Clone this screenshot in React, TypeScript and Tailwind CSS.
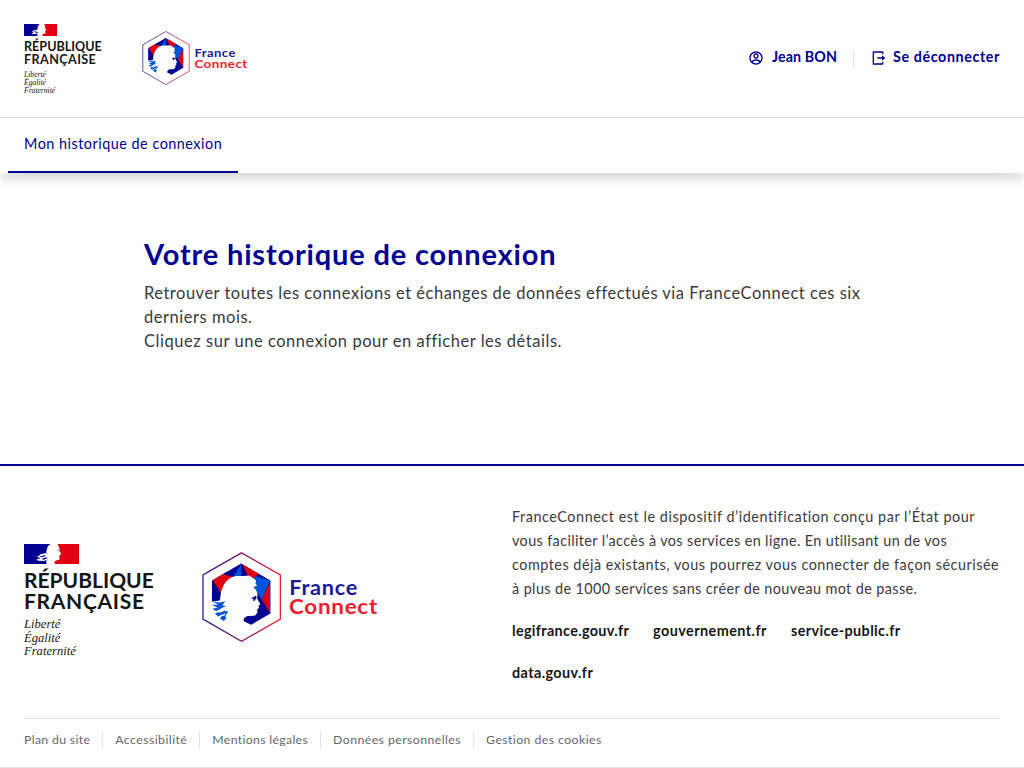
import { RiAccountCircleLine, RiLogoutBoxRLine } from "react-icons/ri";

function Flag({ className }: { className: string }) {
  return (
    <svg viewBox="0 0 165 60" preserveAspectRatio="none" className={className} aria-hidden="true">
      <rect width="165" height="60" fill="#fff" />
      <path d="M0 0H80C73 3 69 9 69 16L66 25L70 30L62 36L72 44L66 52L68 60H0Z" fill="#000091" />
      <path d="M101 0H165V60H92C91 53 93 50 99 49L106 47L107 41L105 37L108 33L112 30L106 21L107 13L104 8Z" fill="#e1000f" />
      <path d="M39 39L50 31L66 27L74 36L73 46L60 51L44 50L36 47L50 43Z" fill="#fff" />
      <path d="M44 39L60 34L67 35L55 39ZM52 45L66 40L71 42L60 47Z" fill="#000091" />
      <path d="M99 18L105 17L103 22Z" fill="#777" />
    </svg>
  );
}

function FranceConnect({ className, id }: { className: string; id: string }) {
  return (
    <svg viewBox="36 35 528 271" className={className} role="img" aria-label="FranceConnect">
      <defs>
        <linearGradient id={id} x1="0" x2="1" y1="0" y2="0">
          <stop offset="0" stopColor="#1b1b96" />
          <stop offset="1" stopColor="#ed1c2e" />
        </linearGradient>
      </defs>
      <path d="M154 37.5L271 104V237L154 304L38 237V104Z" fill="none" stroke={`url(#${id})`} strokeWidth="3.8" />
      <g transform="translate(53 60)">
        <path d="M100 10L188 61V160L130 194L100 180L40 120L12 128V61Z" fill="#000091" />
        <path d="M14 60L46 41L78 50L50 80L40 100Z" fill="#e1000f" />
        <path d="M46 41L60 34L78 50Z" fill="#000091" />
        <path d="M100 12L76 50H100Z" fill="#0053d6" />
        <path d="M102 11L152 40L140 62L122 50Z" fill="#e1000f" />
        <path d="M132 58L146 47L187 61L163 120L142 88Z" fill="#0053d6" />
        <path d="M187 66V158L162 118Z" fill="#e1000f" />
        <path d="M38 104C42 80 52 62 70 52C84 45 105 49 122 46C132 50 138 56 145 61L143 70L148 76L137 81C145 87 150 96 149 106L148 115L158 132L152 137L154 143L148 149L149 157L142 166C131 169 119 164 110 173C106 179 107 187 109 196L98 202L40 182L11 160V124L36 121Z" fill="#fff" />
        <path d="M12 123L34 127L52 124L43 135L54 138L38 145L47 151L61 155L52 168L55 174L48 183L36 175L46 162L31 169L21 161L36 153L24 153L13 146L29 143L12 134L32 134Z" fill="#0053d6" />
        <path d="M27 151L42 145L49 153L34 158ZM39 169L52 158L50 166Z" fill="#fff" />
        <path d="M129 116L143 107L147 111L141 121L136 123L137 116Z" fill="#000091" />
      </g>
      <text x="298" y="164" textLength="207" lengthAdjust="spacingAndGlyphs" letterSpacing="2" fontFamily="Lato, sans-serif" fontWeight="700" fontSize="60" fill="#1b1b96">France</text>
      <text x="297" y="222" textLength="268" lengthAdjust="spacingAndGlyphs" letterSpacing="2" fontFamily="Lato, sans-serif" fontWeight="700" fontSize="60" fill="#ed1c2e">Connect</text>
    </svg>
  );
}

const legal = [
  { label: "Plan du site", style: "tracking-[0.32px]" },
  { label: "Accessibilité", style: "tracking-[0.44px]" },
  { label: "Mentions légales", style: "tracking-[0.31px]" },
  { label: "Données personnelles", style: "tracking-[0.43px]" },
  { label: "Gestion des cookies", style: "tracking-[0.42px]" },
];

export default function App() {
  return (
    <div className="h-[768px] overflow-hidden bg-white font-['Lato',sans-serif] text-[#3a3a3a]">
      <header className="relative h-[173px] bg-white shadow-[0_8px_8px_0_rgba(0,0,0,0.1),0_8px_16px_-16px_rgba(0,0,0,0.32)]">
        <div className="flex h-[118px] items-start border-b border-[#e3e3e3] px-6">
          <div className="w-[118px] pt-6 text-[#161616]">
            <Flag className="block h-3 w-[33px]" />
            <p className="mt-1 text-[12.6px] leading-[13px] font-bold">
              <span className="block">RÉPUBLIQUE</span>
              <span className="block tracking-[0.4px]">FRANÇAISE</span>
            </p>
            <p className="mt-[5px] font-['Liberation_Serif',serif] text-[7.6px] leading-[8.2px] italic">
              Liberté<br />Égalité<br />Fraternité
            </p>
          </div>
          <FranceConnect id="fc-header" className="mt-[31px] h-[54px] w-[106px]" />
          <div className="mt-[46px] ml-auto flex h-6 items-center text-[14.3px] font-bold text-[#000091]">
            <RiAccountCircleLine className="mr-2 size-4" />
            <span className="pb-[2px] tracking-[0.1px]">Jean BON</span>
            <span className="mx-4 h-4 w-px bg-[#e3e3e3]" />
            <RiLogoutBoxRLine className="mr-[7px] size-4" />
            <span className="pb-[2px] tracking-[0.6px]">Se déconnecter</span>
          </div>
        </div>
        <nav className="flex h-[55px] px-2">
          <a className="h-[55px] w-[230px] border-b-2 border-[#000091] px-4 pt-[14px] text-[14.4px] leading-6 tracking-[0.5px] whitespace-nowrap text-[#000091]">Mon historique de connexion</a>
        </nav>
      </header>

      <main className="h-[291px] px-36 pt-[61px]">
        <h1 className="text-[29px] leading-10 font-bold tracking-[0.84px] text-[#000091]">Votre historique de connexion</h1>
        <p className="mt-[7px] text-[16.5px] leading-6">
          <span className="block tracking-[0.5px] whitespace-nowrap">Retrouver toutes les connexions et échanges de données effectués via FranceConnect ces six</span>
          <span className="block tracking-[0.53px]">derniers mois.</span>
          <span className="block tracking-[0.54px]">Cliquez sur une connexion pour en afficher les détails.</span>
        </p>
      </main>

      <footer className="h-[304px] border-t-2 border-b border-t-[#000091] border-b-[#e3e3e3] px-6">
        <div className="flex h-[253px] border-b border-[#e3e3e3]">
          <div className="flex w-[488px] items-start">
            <div className="w-[178px] pt-[78px] text-[#161616]">
              <Flag className="block h-5 w-[55px]" />
              <p className="mt-[5px] text-[21px] leading-[21px] font-bold">
                <span className="block">RÉPUBLIQUE</span>
                <span className="block tracking-[0.7px]">FRANÇAISE</span>
              </p>
              <p className="mt-[7px] font-['Liberation_Serif',serif] text-[12.6px] leading-[13.5px] italic">
                Liberté<br />Égalité<br />Fraternité
              </p>
            </div>
            <FranceConnect id="fc-footer" className="mt-[86px] h-[90px] w-[176px]" />
          </div>
          <div className="pt-[39px] text-[14.4px] leading-6">
            <p className="whitespace-nowrap">
              <span className="block tracking-[0.54px]">FranceConnect est le dispositif d’identification conçu par l’État pour</span>
              <span className="block tracking-[0.38px]">vous faciliter l’accès à vos services en ligne. En utilisant un de vos</span>
              <span className="block tracking-[0.5px]">comptes déjà existants, vous pourrez vous connecter de façon sécurisée</span>
              <span className="block tracking-[0.4px]">à plus de 1000 services sans créer de nouveau mot de passe.</span>
            </p>
            <div className="mt-[18px] flex gap-6 font-bold text-[#161616]">
              <a className="w-[117px] tracking-[0.33px]">legifrance.gouv.fr</a>
              <a className="w-[114px] tracking-[0.45px]">gouvernement.fr</a>
              <a className="tracking-[0.38px]">service-public.fr</a>
            </div>
            <div className="mt-[18px] font-bold tracking-[0.4px] text-[#161616]"><a>data.gouv.fr</a></div>
          </div>
        </div>
        <ul className="flex h-[42px] items-center text-[12.3px] text-[#666]">
          {legal.map((item, i) => (
            <li key={item.label} className="flex items-center">
              {i > 0 && <span className="mx-3 h-4 w-px bg-[#ddd]" />}
              <a className={item.style}>{item.label}</a>
            </li>
          ))}
        </ul>
      </footer>
    </div>
  );
}
